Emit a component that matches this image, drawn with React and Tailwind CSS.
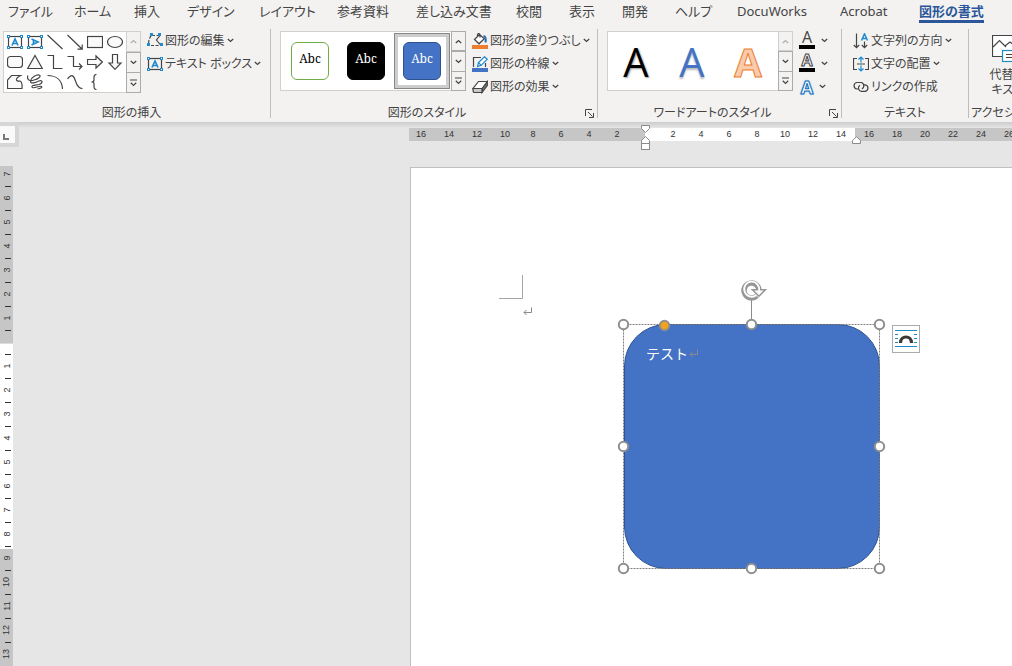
import React, { useState } from 'react';

const TABS = [
  { label: 'ファイル', width: 'w-[66px]' },
  { label: 'ホーム', width: 'w-[60px]' },
  { label: '挿入', width: 'w-[53px]' },
  { label: 'デザイン', width: 'w-[72px]' },
  { label: 'レイアウト', width: 'w-[78px]' },
  { label: '参考資料', width: 'w-[79px]' },
  { label: '差し込み文書', width: 'w-[100px]' },
  { label: '校閲', width: 'w-[53px]' },
  { label: '表示', width: 'w-[53px]' },
  { label: '開発', width: 'w-[53px]' },
  { label: 'ヘルプ', width: 'w-[62px]' },
  { label: 'DocuWorks', width: 'w-[103px]' },
  { label: 'Acrobat', width: 'w-[79px]' },
  { label: '図形の書式', width: 'w-[80px]' },
];

const INK = '#444444';
const BLUE = '#1e8bcd';

// ---- icons ----

function Svg({ size = 16, className = '', children }) {
  return (
    <svg width={size} height={size} viewBox={`0 0 ${size} ${size}`} fill="none" stroke={INK} strokeWidth="1.2" className={`shrink-0 ${className}`} aria-hidden="true">
      {children}
    </svg>
  );
}

function Chevron({ color = INK }) {
  return (
    <svg width="7" height="5" viewBox="0 0 7 5" fill="none" stroke={color} strokeWidth="1.3" className="shrink-0" aria-hidden="true">
      <path d="M0.8 0.9L3.5 3.4L6.2 0.9" />
    </svg>
  );
}

// small blue squares on the corners of a text box icon
function Corners() {
  return (
    <g fill="#fff" stroke={BLUE} strokeWidth="1">
      <rect x="0.5" y="1.5" width="2" height="2" />
      <rect x="13.5" y="1.5" width="2" height="2" />
      <rect x="0.5" y="12.5" width="2" height="2" />
      <rect x="13.5" y="12.5" width="2" height="2" />
    </g>
  );
}

function TextBoxIcon({ vertical = false }) {
  return (
    <Svg>
      <rect x="1.5" y="2.5" width="13" height="11" />
      <g transform={vertical ? 'rotate(90 8 8)' : undefined} stroke={BLUE} strokeWidth="1.7">
        <path d="M5 11.5L8 5L11 11.5M6 9.5H10" />
      </g>
      <Corners />
    </Svg>
  );
}

const SHAPES = [
  { name: 'テキスト ボックス', icon: <TextBoxIcon /> },
  { name: '縦書きテキスト ボックス', icon: <TextBoxIcon vertical /> },
  { name: '線', icon: <Svg><path d="M0.5 1L15.5 15" /></Svg> },
  { name: '線矢印', icon: <Svg><path d="M0.5 1L15 15M15.2 10.5V15.2H10.5" /></Svg> },
  { name: '正方形/長方形', icon: <Svg><rect x="0.5" y="2.5" width="15" height="11" fill="#fafafa" /></Svg> },
  { name: '楕円', icon: <Svg><ellipse cx="8" cy="8" rx="7.5" ry="5.5" fill="#fafafa" /></Svg> },
  { name: '四角形: 角を丸くする', icon: <Svg><rect x="0.5" y="2.5" width="15" height="11" rx="3" fill="#fafafa" /></Svg> },
  { name: '二等辺三角形', icon: <Svg><path d="M8 1.5L15.3 14.5H0.7Z" fill="#fafafa" /></Svg> },
  { name: 'コネクタ: カギ線', icon: <Svg><path d="M0.5 1.5H6.5V14.5H15.5" /></Svg> },
  { name: 'コネクタ: カギ線矢印', icon: <Svg><path d="M0.5 2.5H6.5V12.5H15M12 9.5L15 12.5L12 15.5" /></Svg> },
  { name: '矢印: 右', icon: <Svg><path d="M0.5 5.5H9V2L15.3 8L9 14V10.5H0.5Z" fill="#fafafa" /></Svg> },
  { name: '矢印: 下', icon: <Svg><path d="M5.5 0.5H10.5V9H14L8 15.3L2 9H5.5Z" fill="#fafafa" /></Svg> },
  { name: 'フリーフォーム: 図形', icon: <Svg><path d="M4.5 1.5H13.5Q9 4 9.5 6Q10 7.500 13 7Q15.500 8 15 14.500H0.500V6Z" fill="#fafafa" /></Svg> },
  { name: 'フリーフォーム: フリーハンド', icon: <Svg><path d="M0.800 1.500C-0.500 6 3 7.500 7 6C11 5 14.500 2.500 12.500 1.200C10 0 4 3.500 3.500 7C3 10.500 9 8.500 12 7C16 5.500 16 9 12 10.500C9 11.500 4.500 10.500 5 13C5.500 15.500 13 11 14.500 12.500C15.500 13.500 13 14.500 10.500 15" /></Svg> },
  { name: '円弧', icon: <Svg><path d="M0.500 1.500C9 1.500 15 6 15.500 15" /></Svg> },
  { name: '曲線', icon: <Svg><path d="M0.500 5C5 -1 7 2 8.500 7C10 12 12 14.500 15.500 14.500" /></Svg> },
  { name: '左中かっこ', icon: <Svg><path d="M9.500 0.500Q7 0.500 7 3V6Q7 8 4.500 8Q7 8 7 10V13Q7 15.500 9.500 15.500" /></Svg> },
];

function EditShapeIcon() {
  return (
    <Svg>
      <path d="M13 2.500L9.500 7L13.500 12" />
      <path d="M5 2.500H12M4 3Q1.500 6 1.500 12M4 12.500H12" strokeDasharray="3 1.500" />
      <g fill={BLUE} stroke="none">
        <rect x="3" y="0" width="3" height="3" />
        <rect x="11" y="0" width="3" height="3" />
        <rect x="0" y="10" width="3" height="3" />
        <rect x="13" y="10" width="3" height="3" />
      </g>
    </Svg>
  );
}

function FillIcon() {
  return (
    <Svg>
      <path d="M7.500 1.500L2.500 6.500L7 10.800L12.300 5.800ZM5.500 3.500V1.500Q6.500 -0.500 8 1.500V4.500" fill="#fff" />
      <path d="M11.500 3Q14.500 3.500 13.500 9.500" stroke="#1f6fb5" strokeWidth="2" />
      <rect x="0" y="12" width="16" height="4" fill="#ed7d31" stroke="none" />
    </Svg>
  );
}

function OutlineIcon() {
  return (
    <Svg>
      <path d="M9 1.500H1.500V11M13.500 7V11" />
      <path d="M5.500 10.500L6.500 6.500L12.500 0.700L15.200 3.200L9.200 9.300Z" fill="#fff" stroke={BLUE} />
      <path d="M6.500 6.500L9.200 9.300" stroke={BLUE} />
      <rect x="0" y="12" width="16" height="4" fill="#4472c4" stroke="none" />
    </Svg>
  );
}

function EffectIcon() {
  return (
    <Svg>
      <path d="M10 9.500L15.300 2.500V6.500L10 13.500Z" fill="#777" />
      <path d="M6.500 2.500H15.300L10 9.500H1Z" fill="#fff" />
      <path d="M1 9.500H10V13.500H2Q0.800 13 1 9.500Z" fill="#c8c8c8" />
    </Svg>
  );
}

function DirectionIcon() {
  return (
    <Svg>
      <path d="M3.500 0.500V14.500M0.800 12L3.500 14.700L6.200 12M11.500 8.500V14.500M8.800 12L11.500 14.700L14.200 12" />
      <path d="M8.500 7.500L11.500 0.800L14.500 7.500M9.500 5.500H13.500" stroke={BLUE} strokeWidth="1.500" />
    </Svg>
  );
}

function AlignIcon() {
  return (
    <Svg>
      <path d="M4 2.500H0.500V13.500H4M12 2.500H15.500V13.500H12M4 8H12" />
      <path d="M8 1V6.500M5.500 3.500L8 1L10.500 3.500M8 9.500V15M5.500 12.500L8 15L10.500 12.500" stroke={BLUE} />
    </Svg>
  );
}

function LinkIcon() {
  return (
    <Svg>
      <path d="M5 10H3.800A3.300 3.300 0 0 1 3.800 3.500H8A3.300 3.300 0 0 1 8.800 9.800" />
      <path d="M10.500 5.800H12.200A3.300 3.300 0 0 1 12.200 12.300H8.500A3.300 3.300 0 0 1 7 6.200" />
    </Svg>
  );
}

// ---- ribbon parts ----

function GroupTitle({ children, launcher = false, align = 'text-center' }) {
  return (
    <div className="mt-auto flex h-[10px] items-center">
      <h2 className={`flex-1 text-xs leading-4 font-normal whitespace-nowrap ${align}`}>{children}</h2>
      {launcher && (
        <button className="mr-[2px] flex size-3 items-center justify-center" aria-label={`${children}の設定`}>
          <svg width="9" height="9" viewBox="0 0 9 9" fill="none" stroke={INK}>
            <path d="M0.500 7V0.500H7M3 3L7.500 7.500M8.500 4V8.500H4" />
          </svg>
        </button>
      )}
    </div>
  );
}

function Command({ icon, label, menu = true }) {
  return (
    <button className="flex h-[23px] items-center gap-[2px] text-xs whitespace-nowrap">
      <span className="flex items-center gap-[2px]">
        {icon}
        {label}
      </span>
      {menu && <Chevron />}
    </button>
  );
}

function GalleryScroll({ upDisabled = false }) {
  const border = 'flex flex-1 items-center justify-center border-[#ababab]';
  return (
    <div className="flex w-[15px] flex-col">
      <button aria-label="前の行" disabled={upDisabled} className={upDisabled ? 'flex flex-1 items-center justify-center border border-[#d2d0ce] bg-[#f3f2f1]' : `${border} border`}>
        <span className="rotate-180"><Chevron color={upDisabled ? '#b0b0b0' : INK} /></span>
      </button>
      <button aria-label="次の行" className={`${border} border`}>
        <Chevron />
      </button>
      <button aria-label="その他" className={`${border} border border-t-0`}>
        <svg width="7" height="8" viewBox="0 0 7 8" fill="none" stroke={INK} strokeWidth="1.200">
          <path d="M0 1H7M0.800 3.800L3.500 6.400L6.200 3.800" />
        </svg>
      </button>
    </div>
  );
}

function InsertShapesGroup() {
  return (
    <section className="flex w-[271px] shrink-0 flex-col border-r border-[#c0bebc] pl-[3px]">
      <div className="flex items-start gap-[6px] pt-[2px]">
        <div className="flex h-[62px] bg-[#f3f2f1]">
          <div className="grid grid-cols-6 border border-r-0 border-[#d2d0ce] bg-white pr-px pl-px">
            {SHAPES.map((s) => (
              <button key={s.name} title={s.name} className="flex size-5 items-center justify-center">{s.icon}</button>
            ))}
          </div>
          <GalleryScroll upDisabled />
        </div>
        <div className="-mt-[2px] flex flex-col">
          <Command icon={<EditShapeIcon />} label="図形の編集" />
          <Command icon={<TextBoxIcon />} label="テキスト ボックス" />
        </div>
      </div>
      <div className="mt-auto pr-[10px]"><GroupTitle>図形の挿入</GroupTitle></div>
    </section>
  );
}

const STYLES = [
  { id: 'outline', tile: 'border-[#70ad47] bg-white text-black' },
  { id: 'black', tile: 'border-black bg-black text-white' },
  { id: 'blue', tile: 'border-[#2f528f] bg-[#4472c4] text-white' },
];

function ShapeStylesGroup() {
  const [selected, setSelected] = useState('blue');
  return (
    <section className="flex w-[327px] shrink-0 flex-col border-r border-[#c0bebc] pl-[9px]">
      <div className="flex items-start gap-[6px] pt-[2px]">
        <div className="flex h-[60px]">
          <div className="flex items-center border border-r-0 border-[#d2d0ce] bg-white pr-px pl-px">
            {STYLES.map((s) => (
              <button
                key={s.id}
                aria-pressed={selected === s.id}
                onClick={() => setSelected(s.id)}
                className={`flex size-14 items-center justify-center ${selected === s.id ? 'border border-[#8a8886] bg-white ring-3 ring-[#cdcdcd] ring-inset' : ''}`}
              >
                <span className={`flex size-[38px] items-center justify-center rounded-md border pb-1 font-["Noto_Serif","Liberation_Serif",serif] text-xs ${s.tile}`}>Abc</span>
              </button>
            ))}
          </div>
          <GalleryScroll />
        </div>
        <div className="-mt-[2px] flex flex-col">
          <Command icon={<FillIcon />} label="図形の塗りつぶし" />
          <Command icon={<OutlineIcon />} label="図形の枠線" />
          <Command icon={<EffectIcon />} label="図形の効果" />
        </div>
      </div>
      <div className="mt-auto -ml-[9px]"><GroupTitle launcher>図形のスタイル</GroupTitle></div>
    </section>
  );
}

function WordArtGroup() {
  const letter = 'flex w-14 items-center justify-center font-["Open_Sans",sans-serif] text-[40px] leading-none';
  return (
    <section className="flex w-[244px] shrink-0 flex-col border-r border-[#c0bebc] pl-[9px]">
      <div className="flex items-start gap-[6px] pt-[2px]">
        <div className="flex h-[60px]">
          <div className="flex items-center border border-r-0 border-[#d2d0ce] bg-white pt-px pr-[2px]">
            <button className={`${letter} font-medium text-black [text-shadow:1px_1px_2px_#999]`}>A</button>
            <button className={`${letter} font-medium text-[#4472c4] [text-shadow:0_2px_2px_#bbb]`}>A</button>
            <button className={`${letter} font-bold text-[#f8cbad] [-webkit-text-stroke:1px_#ed7d31]`}>A</button>
          </div>
          <GalleryScroll upDisabled />
        </div>
        <div className='-mt-[2px] flex flex-col font-["Open_Sans",sans-serif]'>
          <button aria-label="文字の塗りつぶし" className="flex h-[23px] items-center gap-[6px]">
            <span className="flex h-[17px] w-4 items-end justify-center border-b-4 border-black pb-px text-base leading-[14px]">A</span>
            <Chevron />
          </button>
          <button aria-label="文字の輪郭" className="flex h-[23px] items-center gap-[6px]">
            <span className="flex h-[17px] w-4 items-end justify-center border-b-4 border-black pb-px text-base leading-[14px] font-bold text-white [-webkit-text-stroke:1px_#444]">A</span>
            <Chevron />
          </button>
          <button aria-label="文字の効果" className="flex h-[23px] items-center gap-1">
            <span className="flex w-4 justify-center text-lg leading-4 font-bold text-white [-webkit-text-stroke:1px_#0f6cbd] [text-shadow:0_0_2px_#1e8bcd]">A</span>
            <Chevron />
          </button>
        </div>
      </div>
      <div className="mt-auto -ml-[9px]"><GroupTitle launcher>ワードアートのスタイル</GroupTitle></div>
    </section>
  );
}

function TextGroup() {
  return (
    <section className="flex w-[127px] shrink-0 flex-col border-r border-[#c0bebc]">
      <div className="flex flex-col items-start pl-[11px]">
        <Command icon={<DirectionIcon />} label="文字列の方向" />
        <Command icon={<AlignIcon />} label="文字の配置" />
        <Command icon={<LinkIcon />} label="リンクの作成" menu={false} />
      </div>
      <GroupTitle>テキスト</GroupTitle>
    </section>
  );
}

function AccessibilityGroup() {
  return (
    <section className="flex w-24 shrink-0 flex-col pl-[2px]">
      <button className="flex w-[72px] flex-col items-center pt-[6px] text-xs leading-[15px]">
        <svg width="30" height="28" viewBox="0 0 30 28" fill="none" stroke={INK} strokeWidth="1.200" aria-hidden="true">
          <path d="M0.500 0.500H29.500V21.500H0.500Z" fill="#fff" />
          <path d="M1 12L7.500 5.500L14 12M13 11L18 7L29 15" />
          <rect x="10.500" y="15.500" width="18" height="11" fill="#fff" stroke={BLUE} />
          <path d="M14 19.500H25M14 22.500H25" />
        </svg>
        <span className="mt-1">代替テ<br />キスト</span>
      </button>
      <GroupTitle align="text-left">アクセシビリティ</GroupTitle>
    </section>
  );
}

function Ribbon() {
  const [active, setActive] = useState('図形の書式');
  return (
    <header className="relative z-10 shrink-0 overflow-hidden bg-[#f3f2f1] text-[#444] [font-feature-settings:'palt']">
      <nav role="tablist" className="flex h-[29px] pl-2 text-[13px]">
        {TABS.map((t) => (
          <button key={t.label} role="tab" aria-selected={active === t.label} onClick={() => setActive(t.label)} className={`flex shrink-0 items-start whitespace-nowrap ${t.width}`}>
            <span className={`flex h-[23px] items-center border-b-3 pt-[3px] leading-[17px] ${active === t.label ? 'border-[#2b579a] font-bold text-[#2b579a]' : 'border-transparent'}`}>{t.label}</span>
          </button>
        ))}
      </nav>
      <div className="flex h-[93px] pb-1">
        <InsertShapesGroup />
        <ShapeStylesGroup />
        <WordArtGroup />
        <TextGroup />
        <AccessibilityGroup />
      </div>
    </header>
  );
}

// ---- rulers ----

function RulerNumbers({ values }) {
  return values.map((n) => <span key={n} className="w-7 shrink-0 text-center">{n}</span>);
}

function HorizontalRuler() {
  return (
    <div className="relative ml-[409px] flex h-[13px] text-[9px] leading-[13px] text-[#333]">
      <div className="flex w-[236px] shrink-0 justify-end overflow-hidden bg-[#c6c6c6] pr-[14px]">
        <RulerNumbers values={[16, 14, 12, 10, 8, 6, 4, 2]} />
      </div>
      <div className="flex w-[210px] shrink-0 bg-white pl-[14px]">
        <RulerNumbers values={[2, 4, 6, 8, 10, 12, 14]} />
      </div>
      <div className="flex flex-1 overflow-hidden bg-[#c6c6c6]">
        <RulerNumbers values={[16, 18, 20, 22, 24, 26]} />
      </div>
      <svg width="9" height="26" viewBox="0 0 9 26" fill="#fff" stroke="#8a8a8a" className="absolute -top-[3px] left-[232px]" aria-hidden="true">
        <path d="M0.500 0.500H8.500V3.500L4.500 7.500L0.500 3.500Z" />
        <path d="M4.500 11.500L8.500 15.500V18.500H0.500V15.500Z" />
        <rect x="0.500" y="18.500" width="8" height="6" />
      </svg>
      <svg width="9" height="9" viewBox="0 0 9 9" fill="#fff" stroke="#8a8a8a" className="absolute top-2 left-[443px]" aria-hidden="true">
        <path d="M4.500 0.700L8.500 4.500V7.500H0.500V4.500Z" />
      </svg>
    </div>
  );
}

function Tick() {
  return (
    <div className="flex h-3 shrink-0 items-center pl-[5px]">
      <div className="h-px w-[6px] bg-[#333]" />
    </div>
  );
}

function Mark({ n }) {
  return (
    <div className="flex h-3 shrink-0 items-center justify-center">
      <span className="-rotate-90">{n}</span>
    </div>
  );
}

function VerticalRuler() {
  return (
    <div className="mt-[19px] flex w-[13px] flex-1 flex-col overflow-hidden text-[9px] leading-3 text-[#333]">
      <div className="h-[177px] shrink-0 bg-[#c6c6c6] pt-[2px]">
        {[7, 6, 5, 4, 3, 2, 1].map((n) => <React.Fragment key={n}><Mark n={n} /><Tick /></React.Fragment>)}
      </div>
      <div className="h-[206px] shrink-0 border-t border-[#dcdcdc] bg-white pt-1">
        {[1, 2, 3, 4, 5, 6, 7, 8].map((n) => <React.Fragment key={n}><Tick /><Mark n={n} /></React.Fragment>)}
        <Tick />
      </div>
      <div className="flex-1 bg-[#c6c6c6] pt-[3px]">
        {[9, 10, 11, 12, 13].map((n) => <React.Fragment key={n}><Mark n={n} /><Tick /></React.Fragment>)}
      </div>
    </div>
  );
}

// ---- document ----

function ReturnMark({ className = '' }) {
  return (
    <svg width="9" height="9" viewBox="0 0 9 9" fill="none" stroke="#8a8a8a" className={`shrink-0 ${className}`} aria-hidden="true">
      <path d="M8.500 0.500V5.500H1M3.500 3L1 5.500L3.500 8" />
    </svg>
  );
}

const HANDLES = [[0, 0], [128, 0], [256, 0], [0, 122], [256, 122], [0, 244], [128, 244], [256, 244]];

function SelectedShape() {
  return (
    <div className="absolute top-[156px] left-[213px] h-[245px] w-64">
      <div className='flex h-full items-start rounded-[42px] border border-[#2f528f] bg-[#4472c4] pt-[18px] pl-[21px] font-["Noto_Sans_CJK_JP",sans-serif] text-sm text-white'>
        <span>テスト</span>
        <ReturnMark className="mt-[6px] ml-px" />
      </div>
      {/* selection frame, handles and rotate grip */}
      <svg width="288" height="300" viewBox="0 0 288 300" fill="none" className="absolute -top-[46px] -left-[16px]" aria-hidden="true">
        <rect x="15.500" y="46.500" width="256" height="244" stroke="#7f7f7f" strokeDasharray="2 1" />
        <path d="M143.500 22V42" stroke="#8c8c8c" />
        <g transform="translate(15.500 46.500)" fill="#fff" stroke="#8f8f8f" strokeWidth="2">
          {HANDLES.map(([x, y]) => <circle key={`${x}-${y}`} cx={x} cy={y} r="4.700" />)}
          <circle cx="41" cy="1" r="4.700" fill="#f4a21c" />
        </g>
        <g stroke="#979797" fill="none">
          <path d="M148.800 17.800A7.500 7.500 0 1 1 151 12.500" strokeWidth="5.400" />
          <path d="M144.500 11.800H157.300L151 18.200Z" fill="#fff" strokeWidth="1.600" />
          <path d="M148.200 17.200A7.500 7.500 0 1 1 151 12.900" stroke="#fff" strokeWidth="1.800" />
        </g>
      </svg>
      <button aria-label="レイアウト オプション" className="absolute top-px left-[268px] flex size-7 items-center justify-center border border-[#ababab] bg-white">
        <svg width="22" height="20" viewBox="0 0 22 20" fill="none" stroke={BLUE}>
          <path d="M0 1.500H22M0 5.500H3M19 5.500H22M0 9.500H3M19 9.500H22M0 13.500H3M19 13.500H22M0 17.500H22" />
          <path d="M5.500 14C5.500 6 16.500 6 16.500 14" stroke="#3b3a39" strokeWidth="3.200" />
        </svg>
      </button>
    </div>
  );
}

function DocumentPage() {
  return (
    <main className="relative mt-[26px] ml-[410px] flex-1 overflow-hidden border-t border-l border-[#c0c0c0] bg-white">
      <div className="mt-[107px] ml-[88px] h-6 w-6 border-r border-b border-[#a6a6a6]" />
      <ReturnMark className="mt-2 ml-28" />
      <SelectedShape />
    </main>
  );
}

export default function App() {
  return (
    <div className='flex h-screen flex-col overflow-hidden bg-[#e6e6e6] font-["Noto_Sans","Noto_Sans_CJK_JP",sans-serif] text-[#444]'>
      <Ribbon />
      <div className='relative flex min-h-0 flex-1 flex-col bg-linear-to-b from-[#cccccc] from-0% to-[#e6e6e6] to-[6px] pt-[6px]'>
        <div className='font-["Liberation_Sans",sans-serif]'>
          <HorizontalRuler />
        </div>
        <DocumentPage />
        <aside className='absolute inset-y-0 left-0 flex flex-col font-["Liberation_Sans",sans-serif]'>
          <button aria-label="左揃えタブ" className="flex h-[25px] w-[19px] items-center border-4 border-l-0 border-[#d6d6d6] bg-[#fafafa] pl-[3px]">
            <span className="mt-[5px] size-[6px] border-b-2 border-l-2 border-[#777]" />
          </button>
          <VerticalRuler />
        </aside>
      </div>
    </div>
  );
}
